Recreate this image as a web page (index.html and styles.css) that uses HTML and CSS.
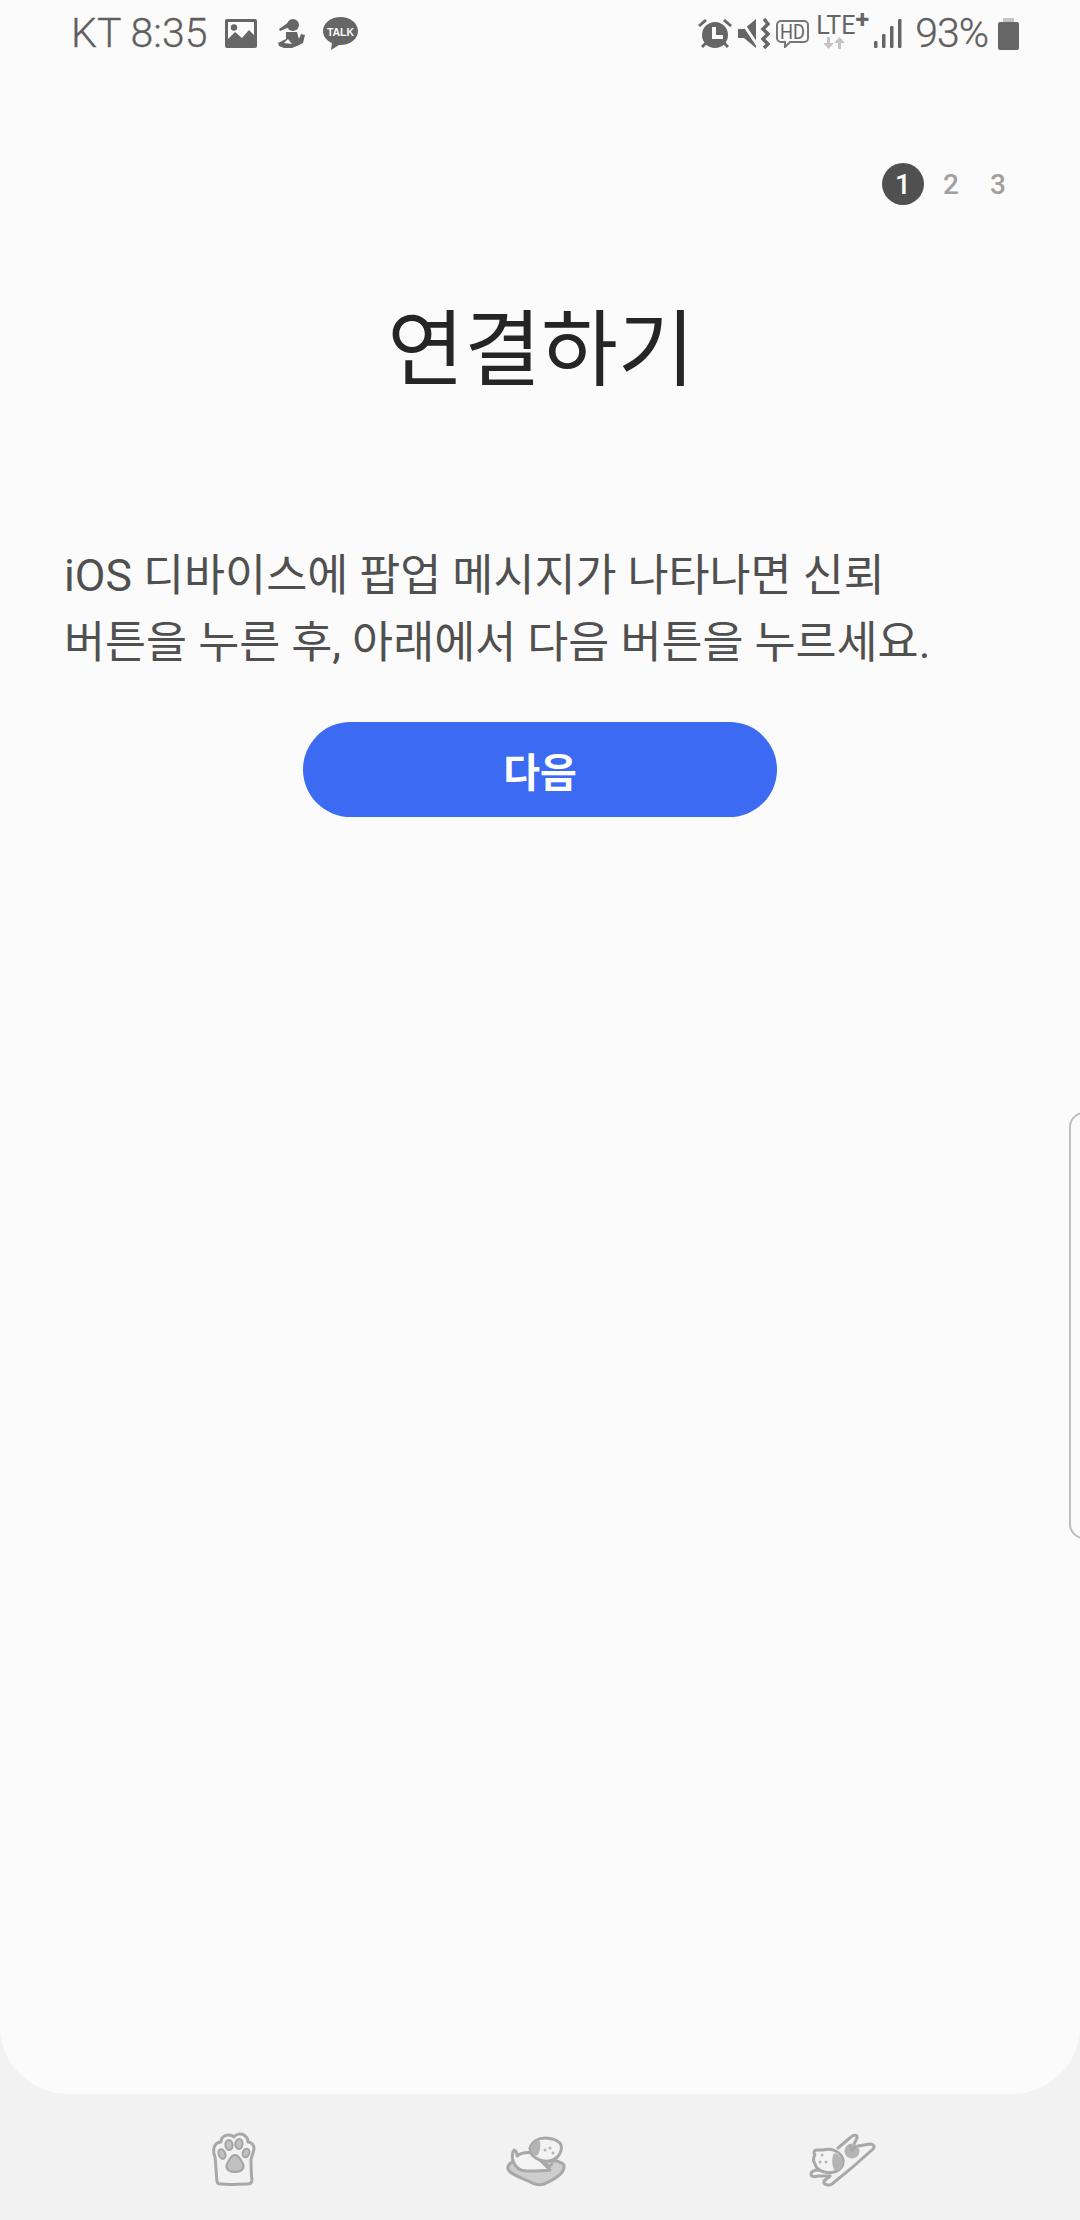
FILE: index.html
```html
<!DOCTYPE html>
<html lang="ko">
<head>
<meta charset="utf-8">
<title>연결하기</title>
<link rel="stylesheet" href="styles.css">
</head>
<body>
<main class="panel">
  <header class="status">
    <div class="status-left">
      <span class="status-text">KT 8:35</span>
      <svg class="ic ic-pic" viewBox="0 0 32 29"><path fill-rule="evenodd" d="M2 0h28a2 2 0 0 1 2 2v25a2 2 0 0 1-2 2H2a2 2 0 0 1-2-2V2a2 2 0 0 1 2-2zM3 3v17l7-7 7 6 7-8 5 5V3z"/><circle cx="9" cy="8.500" r="3.200"/></svg>
      <svg class="ic ic-run" viewBox="0 0 27 29"><circle cx="15" cy="6" r="6"/><path d="M11 3 1 10l1 2 10-4zM8 13h11l2 7 2-5 4 1-2 8-6 3-5 2H6l-5-2-1-3 8-4zm2 7-4 4 8 1z"/></svg>
      <svg class="ic ic-talk" viewBox="0 0 35 33"><path d="M17.500 0C27 0 35 6 35 14s-8 14-17.500 14h-1.500L8 33l1-7C4 24 0 19.500 0 14 0 6 8 0 17.500 0z"/><text x="17.500" y="18.500" class="talk-label">TALK</text></svg>
    </div>
    <div class="status-right">
      <svg class="ic ic-alarm" viewBox="0 0 34 30"><path fill-rule="evenodd" d="M17 3a13 13 0 1 1 0 26 13 13 0 0 1 0-26zm-3 5v12h11v-4h-7V8z"/><path d="M0 6l7-6 2 2-7 6zM34 6l-7-6-2 2 7 6zM3 27l4-4 2 2-4 4zM31 27l-4-4-2 2 4 4z"/></svg>
      <svg class="ic ic-mute" viewBox="0 0 32 31"><path d="M0 11h6L18 1v29L6 20H0z"/><path class="slash" d="M2 1l18 27"/><path class="wave" d="M26 1l4 5-5 5 5 5-5 5 5 5-4 4"/></svg>
      <svg class="ic ic-hd" viewBox="0 0 33 28"><path class="outline" d="M5 1h23a4 4 0 0 1 4 4v13a4 4 0 0 1-4 4H14l-5 5v-5H5a4 4 0 0 1-4-4V5a4 4 0 0 1 4-4z"/><text x="16.500" y="18.500" class="hd-label" textLength="25" lengthAdjust="spacingAndGlyphs">HD</text></svg>
      <span class="lte">
        <span class="lte-label">LTE<sup class="lte-plus">+</sup></span>
        <svg class="ic-arrows" viewBox="0 0 21 13"><path d="M3 1h3v6h4l-5.500 6L-1 7h4zM14 13h3V7h4l-5.500-6L10 7h4z"/></svg>
      </span>
      <svg class="ic ic-signal" viewBox="0 0 28 29"><rect x="0" y="22" width="3.500" height="7" rx="1.200"/><rect x="8" y="15" width="3.500" height="14" rx="1.200"/><rect x="16" y="7" width="3.500" height="22" rx="1.200"/><rect x="24" y="0" width="3.500" height="29" rx="1.200"/></svg>
      <span class="status-text status-pct">93%</span>
      <svg class="ic ic-batt" viewBox="0 0 21 32"><rect class="batt-cap" x="5" y="0" width="11" height="5"/><rect x="0" y="4" width="21" height="28" rx="2"/></svg>
    </div>
  </header>

  <nav class="steps">
    <span class="step step-on">1</span>
    <span class="step">2</span>
    <span class="step">3</span>
  </nav>

  <h1 class="title">연결하기</h1>

  <p class="body-text">iOS 디바이스에 팝업 메시지가 나타나면 신뢰<br>버튼을 누른 후, 아래에서 다음 버튼을 누르세요.</p>

  <div class="actions"><button class="next" type="button">다음</button></div>
</main>

<div class="edge-handle"></div>

<footer class="dock">
  <svg class="dock-ic paw" viewBox="0 0 43 53">
    <path class="ln" d="M4 48C3 40 3 32 2 24 0 20 0 14 3 11c2-2 4-2 5-2 0-5 4-7 8-7 2 0 4 1 5 2 2-3 7-4 10-2 3 2 4 4 4 7 3 0 6 3 6 6 0 4-2 8-3 11 0 7 0 14 1 21 0 3-2 4-5 4-9 0-18 1-26 0-3 0-4-1-4-3z"/>
    <ellipse class="pad" cx="16" cy="12" rx="3.600" ry="5" transform="rotate(-6 16 12)"/>
    <ellipse class="pad" cx="26" cy="11" rx="3.600" ry="5" transform="rotate(6 26 11)"/>
    <ellipse class="pad" cx="9" cy="21" rx="3.300" ry="5" transform="rotate(-22 9 21)"/>
    <ellipse class="pad" cx="33" cy="20" rx="3.300" ry="4.500" transform="rotate(22 33 20)"/>
    <path class="pad" d="M22 22c4 0 5 4 7 7 3 4 2 10-7 10s-10-6-7-10c2-3 3-7 7-7z"/>
  </svg>
  <svg class="dock-ic bed" viewBox="0 0 58 47">
    <path class="ln thick" d="M10 22C4 24 0 27 1 31c2 6 17 10 27 15 3 1 6 1 9 0 7-3 20-9 20-17 1-3-2-4-7-6z"/>
    <path class="ln wh" d="M6 23C5 19 5 15 7 12c3 1 3 4 3 6 4-3 10-4 16-3l17 17c-7 1-15 1-23 1-7 0-12-4-14-10z"/>
    <path class="ln wh" d="M23 10C25 4 31 0 38 0c6 0 14 2 16 7 2 7-4 15-12 16-9 1-19-4-19-13z"/>
    <path class="fl" d="M24 9c2-4 5-6 9-6 1 4 0 10-2 14-3 2-7-2-7-8z"/>
    <circle class="fl" cx="38" cy="12" r="1.500"/><circle class="fl" cx="43" cy="10" r="1.500"/><circle class="fl" cx="46" cy="15" r="1.500"/>
    <path class="ln" d="M39 26l3 3 3-3"/>
  </svg>
  <svg class="dock-ic fly" viewBox="0 0 65 54">
    <path class="ln" d="M48 13l12-2c4 0 5 3 3 5-13 12-27 24-41 35-3 2-9 1-8-3l6-5"/>
    <path class="ln" d="M28 15 41 4c3-3 7-2 6 1l-3 6"/>
    <circle class="fl" cx="42" cy="18" r="7.500"/>
    <path class="ln" d="M40 13l2 4 3-3"/>
    <path class="ln" d="M9 37c-4 0-8 1-8 4s4 3 7 2l12 0"/>
    <path class="ln wh" d="M5 22c-2-2-1-5 2-5h6c7-2 15 0 19 7 3 6 0 13-8 15-8 2-17-1-19-8-2-3-2-6 0-9z"/>
    <path class="fl" d="M24 20c5 1 9 7 9 11-1 4-5 7-8 7-3-4-4-12-1-18z"/>
    <circle class="fl" cx="12" cy="22" r="1.500"/><circle class="fl" cx="10" cy="29" r="1.500"/><circle class="fl" cx="16" cy="29" r="1.500"/>
  </svg>
</footer>
</body>
</html>
```
FILE: styles.css
```css
* { box-sizing: border-box; }
html, body { margin: 0; padding: 0; }
body {
  width: 1080px;
  height: 2220px;
  background: #f2f2f2;
  font-family: Roboto, "Noto Sans CJK KR", sans-serif;
  position: relative;
  overflow: hidden;
}
.panel {
  height: 2094px;
  background: #fbfbfb;
  border-radius: 0 0 68px 68px;
  display: flex;
  flex-direction: column;
}
.status {
  height: 67px;
  padding: 0 61px 0 71px;
  display: flex;
  justify-content: space-between;
  align-items: center;
  color: #666;
}
.status-left, .status-right { display: flex; align-items: center; }
.status-text { font-size: 41px; line-height: 67px; font-weight: 300; color: #5f5f5f; -webkit-text-stroke: 0.3px #5f5f5f; }
.ic { fill: #666; display: block; }
.ic-pic { width: 32px; height: 29px; margin-left: 18px; }
.ic-run { width: 27px; height: 29px; margin-left: 21px; }
.ic-talk { width: 35px; height: 33px; margin-left: 18px; }
.talk-label { font: 700 10.500px "Liberation Sans", sans-serif; fill: #fbfbfb; text-anchor: middle; }
.ic-alarm { width: 34px; height: 30px; }
.ic-mute { width: 32px; height: 31px; margin-left: 6px; }
.slash { fill: none; stroke: #fbfbfb; stroke-width: 3px; }
.wave { fill: none; stroke: #666; stroke-width: 3.500px; }
.ic-hd { width: 33px; height: 28px; margin-left: 6px; }
.outline { fill: none; stroke: #777; stroke-width: 2px; }
.hd-label { font: 400 20px Roboto, sans-serif; fill: #666; text-anchor: middle; }
.lte { display: flex; flex-direction: column; align-items: flex-start; width: 50px; margin-left: 7px; margin-top: -3px; }
.lte-label { font: 400 25px/21px Roboto, sans-serif; color: #666; white-space: nowrap; }
.lte-plus { font-size: 25px; font-weight: 700; line-height: 0; vertical-align: 6px; }
.ic-arrows { width: 21px; height: 13px; fill: #c4c4c4; display: block; margin-left: 8px; }
.ic-signal { width: 28px; height: 29px; margin-left: 8px; }
.status-pct { margin-left: 13px; letter-spacing: -1px; }
.ic-batt { width: 21px; height: 32px; margin-left: 10px; }
.batt-cap { fill: #c4c4c4; }

.steps {
  margin-top: 96px;
  padding-right: 61px;
  display: flex;
  justify-content: flex-end;
  align-items: center;
  gap: 5px;
  height: 42px;
}
.step {
  width: 42px;
  height: 42px;
  border-radius: 50%;
  display: flex;
  align-items: center;
  justify-content: center;
  font-size: 28px;
  font-weight: 500;
  color: #a0a0a0;
}
.step-on { background: #505050; color: #fff; margin-right: 1px; }

.title {
  margin: 91px 0 0;
  padding-left: 2px;
  text-align: center;
  font-size: 83.500px;
  line-height: 110px;
  font-weight: 400;
  color: #252525;
}
.body-text {
  margin: 137px 0 0;
  padding-left: 64px;
  font-size: 44.600px;
  line-height: 67px;
  color: #505050;
  white-space: nowrap;
}
.actions { margin-top: 45px; display: flex; justify-content: center; }
.next {
  width: 474px;
  height: 95px;
  border: 0;
  border-radius: 48px;
  background: #3c6af3;
  color: #fff;
  font: 700 40px Roboto, "Noto Sans CJK KR", sans-serif;
}

.edge-handle {
  position: absolute;
  right: -19px;
  top: 1112px;
  height: 427px;
  width: 30px;
  border: 2px solid #bdbdbd;
  border-radius: 16px;
}

.dock {
  height: 126px;
  position: relative;
}
.dock-ic { position: absolute; fill: none; overflow: visible; }
.paw { left: 213px; top: 39px; width: 43px; height: 53px; }
.bed { left: 507px; top: 44px; width: 58px; height: 47px; }
.fly { left: 810px; top: 39px; width: 65px; height: 54px; }
.ln { fill: none; stroke: #a8a8a8; stroke-width: 3px; stroke-linejoin: round; stroke-linecap: round; }
.thick { fill: #cdcdcd; }
.wh { fill: #f3f3f3; }
.fl { fill: #b4b4b4; }
.pad { fill: #c0c0c0; stroke: #a4a4a4; stroke-width: 2px; }
```
